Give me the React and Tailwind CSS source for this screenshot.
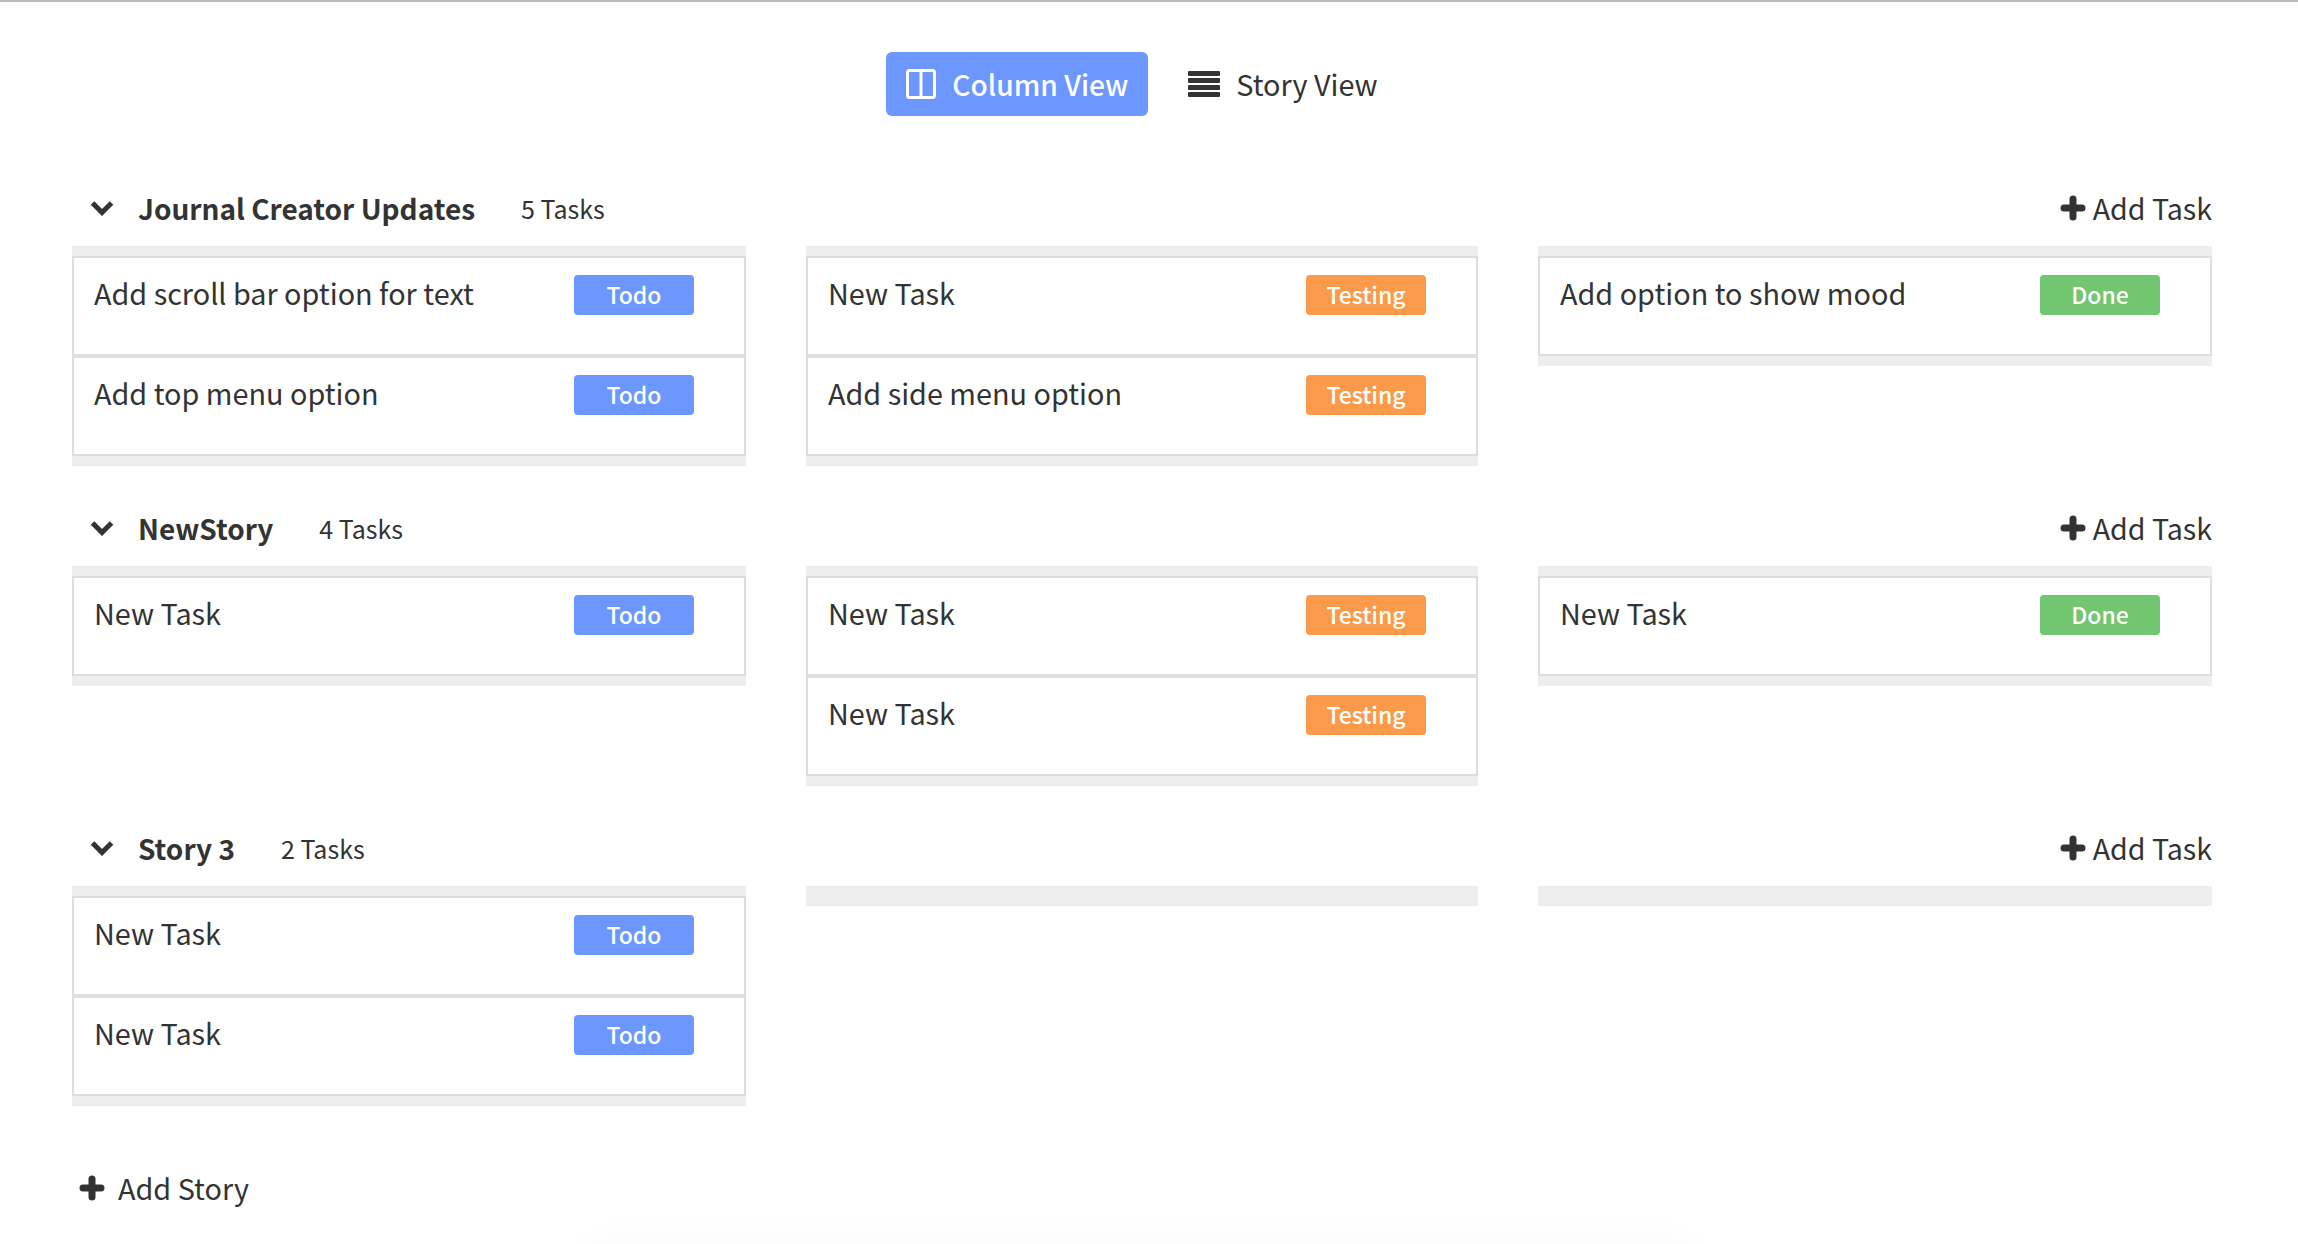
const stories = [
  {
    title: "Journal Creator Updates",
    count: "5 Tasks",
    columns: [
      { status: "Todo", tasks: ["Add scroll bar option for text", "Add top menu option"] },
      { status: "Testing", tasks: ["New Task", "Add side menu option"] },
      { status: "Done", tasks: ["Add option to show mood"] },
    ],
  },
  {
    title: "NewStory",
    count: "4 Tasks",
    columns: [
      { status: "Todo", tasks: ["New Task"] },
      { status: "Testing", tasks: ["New Task", "New Task"] },
      { status: "Done", tasks: ["New Task"] },
    ],
  },
  {
    title: "Story 3",
    count: "2 Tasks",
    columns: [
      { status: "Todo", tasks: ["New Task", "New Task"] },
      { status: "Testing", tasks: [] },
      { status: "Done", tasks: [] },
    ],
  },
];

const badgeColors = {
  Todo: "bg-[#6b97ff]",
  Testing: "bg-[#fb9a4b]",
  Done: "bg-[#72c66f]",
};

function PlusIcon({ className }) {
  return (
    <svg width="26" height="26" viewBox="0 0 26 26" fill="none" stroke="currentColor" strokeWidth="7" strokeLinecap="round" className={className}>
      <path d="M13 4v18M4 13h18" />
    </svg>
  );
}

function TaskCard({ name, status }) {
  return (
    <div className="h-[100px] border-2 border-[#dedede] bg-white pl-[20px] pr-[50px] pt-[17px] flex justify-between items-start">
      <span className="text-[28.8px] leading-[36px]">{name}</span>
      <span className={`${badgeColors[status]} w-[120px] h-[40px] pb-[2px] rounded-[4px] flex items-center justify-center text-white text-[23px] font-medium`}>
        {status}
      </span>
    </div>
  );
}

function Story({ story }) {
  return (
    <section className="mb-[36px]">
      <div className="h-[52px] flex items-center justify-between">
        <div className="flex items-center">
          <svg width="24" height="16" viewBox="0 0 24 16" fill="none" stroke="currentColor" strokeWidth="5" className="ml-[18px]">
            <path d="M2.5 3l9.5 9.5L21.5 3" />
          </svg>
          <h2 className="ml-[24px] text-[28px] font-bold">{story.title}</h2>
          <span className="ml-[46px] text-[25px] mt-[2px]">{story.count}</span>
        </div>
        <button className="flex items-center text-[28.6px]">
          <PlusIcon className="mr-[7px]" />
          Add Task
        </button>
      </div>
      <div className="mt-[12px] grid grid-cols-[674px_672px_674px] gap-x-[60px] items-start">
        {story.columns.map((col) => (
          <div key={col.status} className="bg-[#eeeeee] py-[10px]">
            {col.tasks.map((t, i) => (
              <TaskCard key={i} name={t} status={col.status} />
            ))}
          </div>
        ))}
      </div>
    </section>
  );
}

export default function App() {
  return (
    <div className="relative h-[1244px] overflow-hidden bg-white border-t-[2px] border-[#bbbbbb] pl-[72px] pr-[86px] text-[#333333] font-['Noto_Sans_CJK_SC','Source_Sans_Pro',sans-serif]">
      <div className="pt-[50px] flex items-center justify-center h-[114px] pr-[20px]">
        <button className="w-[262px] h-[64px] rounded-[6px] bg-[#6b97ff] text-white text-[28.2px] font-medium flex items-center justify-center">
          <svg width="30" height="30" viewBox="0 0 30 30" fill="none" stroke="currentColor" strokeWidth="3" className="mr-[16px]">
            <rect x="1.5" y="1.5" width="27" height="27" rx="2" />
            <path d="M15 2v26" />
          </svg>
          Column View
        </button>
        <button className="ml-[40px] flex items-center text-[28.8px]">
          <svg width="32" height="26" viewBox="0 0 32 26" fill="currentColor" className="mr-[16px]">
            <rect y="0" width="32" height="5" rx="1" />
            <rect y="7" width="32" height="5" rx="1" />
            <rect y="14" width="32" height="5" rx="1" />
            <rect y="21" width="32" height="5" rx="1" />
          </svg>
          Story View
        </button>
      </div>
      <div className="mt-[66px]">
        {stories.map((s) => (
          <Story key={s.title} story={s} />
        ))}
      </div>
      <button className="mt-[58px] h-[48px] ml-[7px] flex items-center text-[28.8px]">
        <PlusIcon className="mr-[13px]" />
        Add Story
      </button>
      <div className="absolute left-[590px] w-[1100px] bottom-[-60px] h-[60px] shadow-[0_0_40px_rgba(0,0,0,0.03)]"></div>
    </div>
  );
}
